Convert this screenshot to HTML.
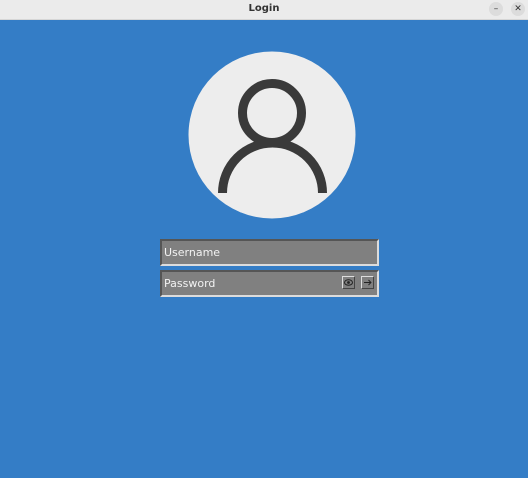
<!DOCTYPE html>
<html><head><style>
body{margin:0;width:528px;height:478px;overflow:hidden;background:#347dc6;font-family:"DejaVu Sans","Liberation Sans",sans-serif;position:relative}
.tb{position:absolute;left:0;top:0;width:528px;height:20px;background:#ebebeb;border-bottom:1px solid #d6d6d6;box-sizing:border-box}
.tb .t{position:absolute;left:0;width:528px;top:3px;text-align:center;font-size:10px;font-weight:bold;color:#333}
.btn{position:absolute;top:2px;width:14px;height:14px;border-radius:50%;background:#dcdcdc;font-size:9px;color:#333;text-align:center;line-height:14px}
.in{position:absolute;left:160px;width:219px;height:27px;box-sizing:border-box;background:#808080;border:2px solid;border-color:#555 #dcdcdc #dcdcdc #555}
.in span{position:absolute;left:2px;top:5px;font-size:11px;color:#f2f2f2}
.ib{position:absolute;top:4px;width:13px;height:13px;box-sizing:border-box;border:1px solid;border-color:#ddd #444 #444 #ddd}
</style></head><body>
<div class="tb"><div class="t">Login</div>
<div class="btn" style="left:489px">–</div><div class="btn" style="left:511px">✕</div></div>
<svg style="position:absolute;left:0;top:0" width="528" height="478">
<circle cx="272" cy="135" r="83.5" fill="#ededed"/>
<circle cx="272" cy="113" r="29.5" fill="none" stroke="#3a3a3a" stroke-width="9"/>
<path d="M222.5 193 A50 50 0 0 1 322.5 193" fill="none" stroke="#3a3a3a" stroke-width="9"/>
</svg>
<div class="in" style="top:239px"><span>Username</span></div>
<div class="in" style="top:270px"><span>Password</span>
<div class="ib" style="left:180px"><svg width="11" height="11" style="position:absolute;left:0;top:0"><ellipse cx="5.5" cy="5.5" rx="4" ry="2.7" fill="none" stroke="#222" stroke-width="1"/><circle cx="5.5" cy="5.5" r="1.4" fill="#222"/></svg></div>
<div class="ib" style="left:199px"><svg width="11" height="11" style="position:absolute;left:0;top:0"><path d="M2 5.5H9M6.5 3L9 5.5L6.5 8" fill="none" stroke="#222" stroke-width="0.9"/></svg></div>
</div>
</body></html>
